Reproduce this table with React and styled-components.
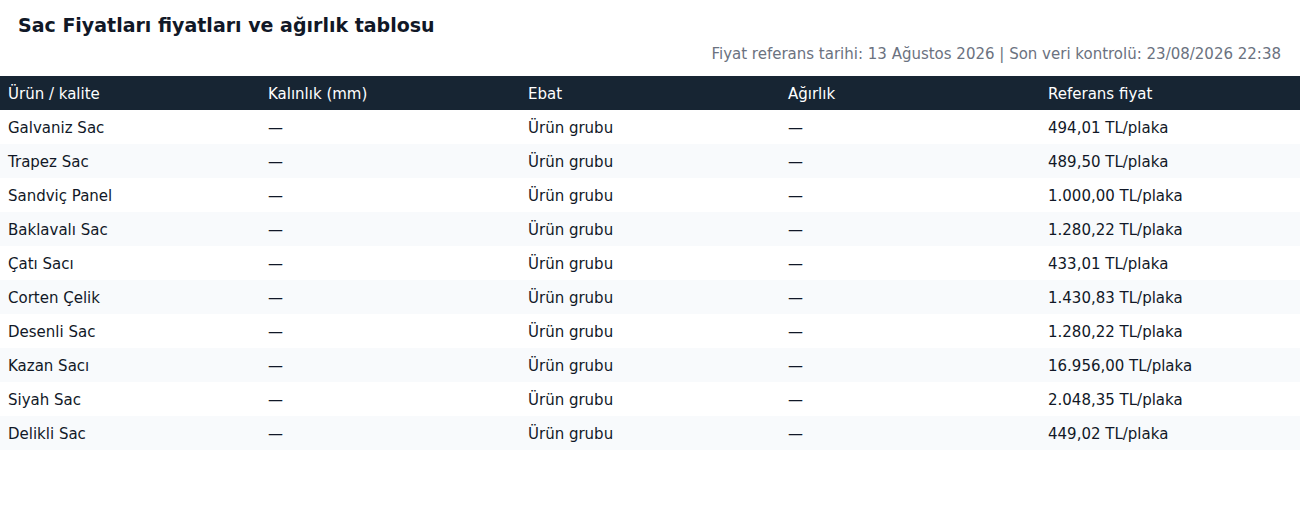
import styled, { createGlobalStyle } from "styled-components"

const rows = [
  { name: "Galvaniz Sac", price: "494,01 TL/plaka" },
  { name: "Trapez Sac", price: "489,50 TL/plaka" },
  { name: "Sandviç Panel", price: "1.000,00 TL/plaka" },
  { name: "Baklavalı Sac", price: "1.280,22 TL/plaka" },
  { name: "Çatı Sacı", price: "433,01 TL/plaka" },
  { name: "Corten Çelik", price: "1.430,83 TL/plaka" },
  { name: "Desenli Sac", price: "1.280,22 TL/plaka" },
  { name: "Kazan Sacı", price: "16.956,00 TL/plaka" },
  { name: "Siyah Sac", price: "2.048,35 TL/plaka" },
  { name: "Delikli Sac", price: "449,02 TL/plaka" },
]

const columns = ["Ürün / kalite", "Kalınlık (mm)", "Ebat", "Ağırlık", "Referans fiyat"]

export default function App() {
  return (
    <>
      <GlobalStyle />
      <PageStyled>
        <div className="head">
          <h2>Sac Fiyatları fiyatları ve ağırlık tablosu</h2>
          <p className="meta">
            Fiyat referans tarihi: 13 Ağustos 2026 | Son veri kontrolü: 23/08/2026 22:38
          </p>
        </div>

        <Table>
          <thead>
            <tr>
              {columns.map((c) => (
                <th key={c}>{c}</th>
              ))}
            </tr>
          </thead>
          <tbody>
            {rows.map((r) => (
              <tr key={r.name}>
                <td>{r.name}</td>
                <td>—</td>
                <td>Ürün grubu</td>
                <td>—</td>
                <td>{r.price}</td>
              </tr>
            ))}
          </tbody>
        </Table>
      </PageStyled>
    </>
  )
}

const GlobalStyle = createGlobalStyle`
  html, body {
    margin: 0;
    padding: 0;
    background: #ffffff;
  }
  body {
    font-family: "DejaVu Sans", "Noto Sans", sans-serif;
    color: #111827;
  }
`

const PageStyled = styled.div`
  width: 1300px;

  .head {
    padding: 14px 19px 12px 18px;
    display: flex;
    flex-direction: column;
    gap: 7px;

    h2 {
      margin: 0;
      font-size: 19px;
      line-height: 23px;
      font-weight: 700;
      color: #111827;
    }

    .meta {
      margin: 0;
      font-size: 15px;
      line-height: 20px;
      color: #6b7280;
      text-align: right;
    }
  }
`

const Table = styled.table`
  width: 100%;
  border-collapse: collapse;
  table-layout: fixed;
  font-size: 15px;

  th,
  td {
    height: 34px;
    padding: 1px 8px 0;
    text-align: left;
    vertical-align: middle;
    box-sizing: border-box;
  }

  th {
    background-color: #172533;
    color: #ffffff;
    font-weight: 400;
  }

  td {
    color: #111827;
  }

  tbody tr:nth-child(even) td {
    background-color: #f8fafc;
  }
`
